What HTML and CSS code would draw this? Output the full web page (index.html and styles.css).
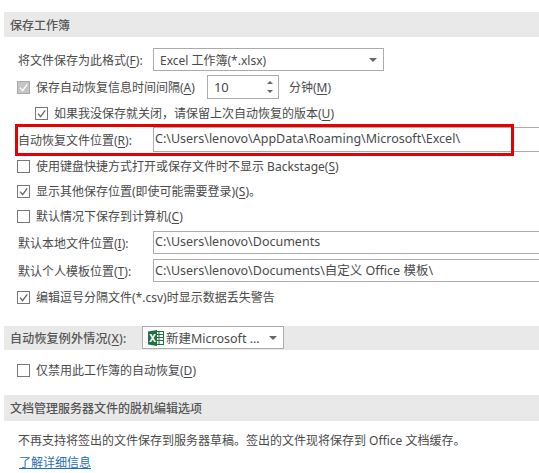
FILE: index.html
```html
<!DOCTYPE html>
<html lang="zh-CN">
<head>
    <meta charset="UTF-8">
    <title>保存工作簿</title>
    <link rel="stylesheet" href="styles.css">
</head>
<body>
    <div class="section-head">保存工作簿</div>

    <div class="row row-format">
        <span class="label">将文件保存为此格式(<u>F</u>):</span>
        <div class="select select-format">
            <span>Excel 工作簿(*.xlsx)</span>
            <i class="caret"></i>
        </div>
    </div>

    <div class="row row-interval">
        <span class="check disabled"><svg viewBox="0 0 11 11"><path d="M2 5.6l2.6 3L9.2 2.4"/></svg></span>
        <span class="text text-muted">保存自动恢复信息时间间隔(<u>A</u>)</span>
        <div class="spin">
            <span>10</span>
            <div class="spin-arrows"><i class="up"></i><i class="down"></i></div>
        </div>
        <span class="text">分钟(<u>M</u>)</span>
    </div>

    <div class="row row-sub">
        <span class="check"><svg viewBox="0 0 11 11"><path d="M2 5.6l2.6 3L9.2 2.4"/></svg></span>
        <span class="text">如果我没保存就关闭，请保留上次自动恢复的版本(<u>U</u>)</span>
    </div>

    <div class="row row-path row-recover">
        <span class="label">自动恢复文件位置(<u>R</u>):</span>
        <div class="path">C:\Users\lenovo\AppData\Roaming\Microsoft\Excel\</div>
        <div class="highlight"></div>
    </div>

    <div class="row row-check1">
        <span class="check"></span>
        <span class="text">使用键盘快捷方式打开或保存文件时不显示 Backstage(<u>S</u>)</span>
    </div>
    <div class="row row-check2">
        <span class="check"><svg viewBox="0 0 11 11"><path d="M2 5.6l2.6 3L9.2 2.4"/></svg></span>
        <span class="text">显示其他保存位置(即使可能需要登录)(<u>S</u>)。</span>
    </div>
    <div class="row row-check2">
        <span class="check"></span>
        <span class="text">默认情况下保存到计算机(<u>C</u>)</span>
    </div>

    <div class="row row-path row-local">
        <span class="label">默认本地文件位置(<u>I</u>):</span>
        <div class="path">C:\Users\lenovo\Documents</div>
    </div>
    <div class="row row-path row-template">
        <span class="label">默认个人模板位置(<u>T</u>):</span>
        <div class="path">C:\Users\lenovo\Documents\自定义 Office 模板\</div>
    </div>

    <div class="row row-csv">
        <span class="check"><svg viewBox="0 0 11 11"><path d="M2 5.6l2.6 3L9.2 2.4"/></svg></span>
        <span class="text">编辑逗号分隔文件(*.csv)时显示数据丢失警告</span>
    </div>

    <div class="section-head section-exceptions">
        <span class="head-label">自动恢复例外情况(<u>X</u>):</span>
        <div class="select select-book">
            <svg class="xl-icon" viewBox="0 0 16 16">
                <rect x="6" y="1.5" width="9.5" height="13" fill="#fff" stroke="#1e7145" stroke-width="1"/>
                <path d="M11 2v12M8 4.5h7M8 7.5h7M8 10.5h7" stroke="#1e7145" stroke-width="1"/>
                <path d="M0 1.5L9 0v16L0 14.5z" fill="#1e7145"/>
                <text x="4.5" y="11.5" class="xl-letter">X</text>
            </svg>
            <span>新建Microsoft ...</span>
            <i class="caret"></i>
        </div>
    </div>

    <div class="row row-only">
        <span class="check"></span>
        <span class="text">仅禁用此工作簿的自动恢复(<u>D</u>)</span>
    </div>

    <div class="section-head section-offline">文档管理服务器文件的脱机编辑选项</div>

    <div class="row row-note">
        <span class="text">不再支持将签出的文件保存到服务器草稿。签出的文件现将保存到 Office 文档缓存。</span>
    </div>
    <div class="row row-link">
        <a href="#">了解详细信息</a>
    </div>
</body>
</html>
```

FILE: styles.css
```css
body {
    margin: 0;
    padding-top: 12px;
    height: 461px;
    overflow: hidden;
    background-color: #fff;
    color: #4a4a4a;
    font-family: "Noto Sans", "Noto Sans CJK SC", sans-serif;
    font-size: 12px;
}
u {
    text-underline-offset: 2px;
}
.section-head {
    display: flex;
    align-items: center;
    height: 25px;
    margin-left: 4px;
    padding-left: 6px;
    background-color: #e9e9e9;
    font-weight: 500;
    color: #555;
}
.section-exceptions {
    height: 24px;
    margin-top: 17px;
}
.section-offline {
    height: 26px;
    margin-top: 13px;
}
.head-label {
    width: 132px;
    flex: none;
    letter-spacing: 0.2px;
}
.row {
    position: relative;
    display: flex;
    align-items: center;
    height: 24px;
    padding-left: 18px;
}
.row-format {
    height: 23px;
    margin-top: 11px;
}
.row-interval {
    margin-top: 4px;
    padding-left: 17px;
}
.row-sub {
    margin-top: 2px;
    padding-left: 35px;
}
.row-path {
    height: 23px;
}
.row-recover {
    height: 25px;
    margin-top: 2px;
}
.row-check1 {
    margin-top: 2px;
    padding-left: 17px;
}
.row-check2 {
    margin-top: 1px;
    padding-left: 17px;
}
.row-local {
    margin-top: 3px;
}
.row-template {
    margin-top: 5px;
}
.row-csv {
    margin-top: 3px;
    padding-left: 17px;
}
.row-only {
    margin-top: 8px;
    padding-left: 17px;
}
.row-note {
    margin-top: 7px;
}
.row-link {
    height: 20px;
    padding-left: 19px;
}
.row-link a {
    color: #1f6fb2;
}
.label {
    width: 135px;
    flex: none;
}
.text {
    margin-left: 6px;
}
.row-note .text {
    margin-left: 0;
}
.check {
    display: block;
    flex: none;
    width: 11px;
    height: 11px;
    border: 1px solid #777;
    background-color: #fff;
}
.check svg {
    display: block;
    width: 11px;
    height: 11px;
}
.check path {
    fill: none;
    stroke: #666;
    stroke-width: 1.3;
}
.check.disabled {
    background-color: #c6c6c6;
    border-color: #aaa;
}
.check.disabled path {
    stroke: #fff;
}
.select, .spin, .path {
    box-sizing: border-box;
    border: 1px solid #ababab;
    background-color: #fff;
    display: flex;
    align-items: center;
}
.select-format {
    width: 231px;
    height: 100%;
    padding: 0 6px;
    justify-content: space-between;
}
.select-book {
    width: 142px;
    height: 23px;
    padding: 0 4px 0 5px;
    font-size: 12.5px;
    font-weight: 400;
    color: #4a4a4a;
    margin-bottom: 1px;
}
.select-book .caret {
    margin-left: auto;
    margin-right: 2px;
}
.xl-icon {
    width: 16px;
    height: 16px;
    flex: none;
    margin-right: 2px;
}
.xl-letter {
    fill: #fff;
    font-size: 10px;
    font-weight: 700;
    text-anchor: middle;
}
.caret {
    width: 0;
    height: 0;
    border-left: 4px solid transparent;
    border-right: 4px solid transparent;
    border-top: 4px solid #666;
}
.spin {
    width: 72px;
    height: 100%;
    margin-left: 12px;
    padding-left: 6px;
    justify-content: space-between;
    font-size: 13px;
}
.spin + .text {
    margin-left: 10px;
}
.spin-arrows {
    display: flex;
    flex-direction: column;
    gap: 6px;
    margin-right: 5px;
}
.spin-arrows i {
    display: block;
    width: 0;
    height: 0;
    border-left: 3px solid transparent;
    border-right: 3px solid transparent;
}
.spin-arrows .up {
    border-bottom: 3px solid #666;
}
.spin-arrows .down {
    border-top: 3px solid #666;
}
.path {
    flex: none;
    width: 400px;
    height: 100%;
    padding: 0 0 2px 1px;
    font-size: 12.5px;
    white-space: nowrap;
}
.highlight {
    position: absolute;
    left: 15px;
    top: -3px;
    width: 493px;
    height: 26px;
    border: 3px solid #e60000;
}
```
